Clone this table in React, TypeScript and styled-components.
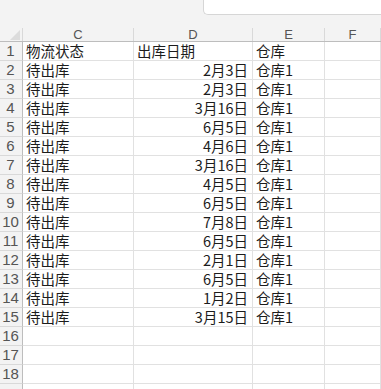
import React from "react";
import styled, { createGlobalStyle } from "styled-components";

const GlobalStyle = createGlobalStyle`
  html, body {
    margin: 0;
    padding: 0;
    background: #ffffff;
  }
  body {
    font-family: "Noto Sans CJK SC", "Liberation Sans", sans-serif;
  }
`;

const COLS = "23px 111px 119px 72px 1fr";

const Sheet = styled.div`
  width: 381px;
  height: 389px;
  overflow: hidden;
  background: #ffffff;
`;

const TopBand = styled.div`
  height: 28px;
  background: #f3f3f3;
  display: flex;
  justify-content: flex-end;
  align-items: flex-start;
`;

const FormulaBox = styled.div`
  width: 178px;
  height: 15px;
  background: #ffffff;
  border-left: 1px solid #d6d6d6;
  border-bottom: 1px solid #d6d6d6;
  border-bottom-left-radius: 5px;
  box-sizing: border-box;
`;

const HeaderRow = styled.div`
  display: grid;
  grid-template-columns: ${COLS};
  height: 13px;
  background: #f3f3f3;
  border-bottom: 1px solid #bdbdbd;
`;

const Corner = styled.div`
  position: relative;
  border-right: 1px solid #d9d9d9;
  &::after {
    content: "";
    position: absolute;
    right: 2px;
    bottom: 1px;
    width: 0;
    height: 0;
    border-left: 10px solid transparent;
    border-bottom: 10px solid #dcdcdc;
  }
`;

const ColLabel = styled.div`
  border-right: 1px solid #d9d9d9;
  font-family: "Liberation Sans", "Noto Sans", sans-serif;
  font-size: 13px;
  line-height: 12px;
  padding-top: 1px;
  color: #555555;
  text-align: center;
  white-space: nowrap;
`;

const Row = styled.div`
  display: grid;
  grid-template-columns: ${COLS};
  height: 19px;
`;

const RowNum = styled.div`
  background: #f3f3f3;
  border-right: 1px solid #bdbdbd;
  border-bottom: 1px solid #d9d9d9;
  font-family: "Liberation Sans", "Noto Sans", sans-serif;
  font-size: 15px;
  line-height: 18px;
  color: #555555;
  text-align: center;
  box-sizing: border-box;
  padding-right: 1px;
`;

const Cell = styled.div<{ $right?: boolean }>`
  border-right: 1px solid #e1e1e1;
  border-bottom: 1px solid #e1e1e1;
  box-sizing: border-box;
  font-family: "Noto Sans CJK SC", "Liberation Sans", sans-serif;
  font-size: 14.5px;
  line-height: 18px;
  color: #1c1c1c;
  white-space: nowrap;
  text-align: ${(p) => (p.$right ? "right" : "left")};
  padding: ${(p) => (p.$right ? "0 4px 0 0" : "0 0 0 3px")};
`;

const data: [string, string, string][] = [
  ["物流状态", "出库日期", "仓库"],
  ["待出库", "2月3日", "仓库1"],
  ["待出库", "2月3日", "仓库1"],
  ["待出库", "3月16日", "仓库1"],
  ["待出库", "6月5日", "仓库1"],
  ["待出库", "4月6日", "仓库1"],
  ["待出库", "3月16日", "仓库1"],
  ["待出库", "4月5日", "仓库1"],
  ["待出库", "6月5日", "仓库1"],
  ["待出库", "7月8日", "仓库1"],
  ["待出库", "6月5日", "仓库1"],
  ["待出库", "2月1日", "仓库1"],
  ["待出库", "6月5日", "仓库1"],
  ["待出库", "1月2日", "仓库1"],
  ["待出库", "3月15日", "仓库1"],
  ["", "", ""],
  ["", "", ""],
  ["", "", ""],
  ["", "", ""],
];

export default function App() {
  return (
    <Sheet>
      <GlobalStyle />
      <TopBand>
        <FormulaBox />
      </TopBand>
      <HeaderRow>
        <Corner />
        <ColLabel>C</ColLabel>
        <ColLabel>D</ColLabel>
        <ColLabel>E</ColLabel>
        <ColLabel>F</ColLabel>
      </HeaderRow>
      {data.map((r, i) => (
        <Row key={i}>
          {/* the 19th row only peeks in at the bottom edge */}
          <RowNum>{i < 18 ? i + 1 : ""}</RowNum>
          <Cell>{r[0]}</Cell>
          <Cell $right={i > 0}>{r[1]}</Cell>
          <Cell>{r[2]}</Cell>
          <Cell />
        </Row>
      ))}
    </Sheet>
  );
}
